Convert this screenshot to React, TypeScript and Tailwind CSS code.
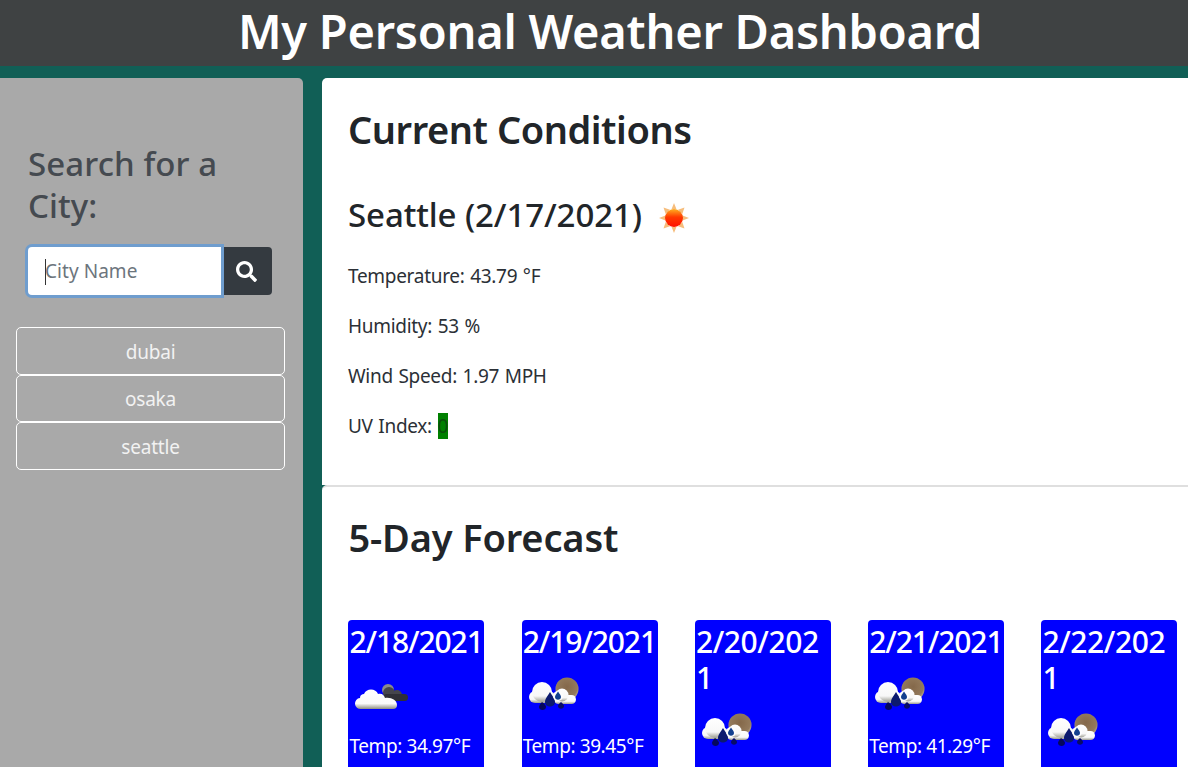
import React from 'react'
import { FaSearch } from 'react-icons/fa'

const font = { fontFamily: '"Noto Sans", sans-serif' }

const SunIcon = () => (
  <svg viewBox="0 0 32 32" className="w-[32px] h-[32px]">
    <defs>
      <linearGradient id="sunCore" x1="0" y1="0" x2="0" y2="1">
        <stop offset="0%" stopColor="#ffb020" />
        <stop offset="45%" stopColor="#ff3a00" />
        <stop offset="100%" stopColor="#ff1000" />
      </linearGradient>
    </defs>
    <g fill="#f6bd7c">
      <path d="M16 1l2.600 6.500h-5.200z" />
      <path d="M16 31l2.600-6.500h-5.200z" />
      <path d="M1 16l6.500-2.600v5.200z" />
      <path d="M31 16l-6.500-2.600v5.200z" />
      <path d="M5.500 5.500l6.500 2.200-4.300 4.300z" />
      <path d="M26.500 5.500l-6.500 2.200 4.300 4.300z" />
      <path d="M5.500 26.500l6.500-2.200-4.300-4.300z" />
      <path d="M26.500 26.500l-6.500-2.200 4.300-4.300z" />
    </g>
    <circle cx="16" cy="16" r="9" fill="url(#sunCore)" />
  </svg>
)

const CloudyIcon = () => (
  <svg viewBox="0 0 60 40" className="w-[60px] h-[40px]">
    <defs>
      <linearGradient id="cloudWhite" x1="0" y1="0" x2="0" y2="1">
        <stop offset="0%" stopColor="#ffffff" />
        <stop offset="72%" stopColor="#fafafa" />
        <stop offset="100%" stopColor="#8d8d80" />
      </linearGradient>
    </defs>
    <circle cx="35" cy="13" r="6" fill="#8b8b8b" />
    <circle cx="36" cy="16" r="6" fill="#45454c" />
    <circle cx="44" cy="18" r="5" fill="#45454c" />
    <rect x="30" y="17" width="25" height="7" rx="3.500" fill="#2f2f36" />
    <path d="M8 32a5.500 5.500 0 0 1-1-11c0-3 2-4 4-4 2-6 12-6 14 0 4-1 6 1 7 4 6-1 12 2 12 7a4 4 0 0 1-4 4z" fill="url(#cloudWhite)" />
  </svg>
)

const RainIcon = () => (
  <svg viewBox="0 0 60 40" className="w-[60px] h-[40px]">
    <defs>
      <linearGradient id="rainCloud" x1="0" y1="0" x2="0" y2="1">
        <stop offset="0%" stopColor="#ffffff" />
        <stop offset="70%" stopColor="#f8f8f8" />
        <stop offset="100%" stopColor="#9b9b90" />
      </linearGradient>
      <radialGradient id="rainSun" cx="50%" cy="40%" r="60%">
        <stop offset="0%" stopColor="#84684a" />
        <stop offset="75%" stopColor="#937a5c" />
        <stop offset="100%" stopColor="#c2b29c" />
      </radialGradient>
    </defs>
    <circle cx="39" cy="12" r="11.500" fill="url(#rainSun)" />
    <g fill="url(#rainCloud)">
      <rect x="1" y="14" width="26" height="12" rx="6" />
      <circle cx="14" cy="15" r="10" />
    </g>
    <g fill="url(#rainCloud)">
      <rect x="26" y="18" width="22" height="9" rx="4.500" />
      <circle cx="34" cy="18" r="6.500" />
    </g>
    <path d="M22 15c-3 5-5 7-5 10 0 6 10 6 10 0 0-3-2-5-5-10z" fill="#0c1a6e" />
    <circle cx="30" cy="19" r="5" fill="#fdfdfd" />
    <path d="M30 14.500c-2 3-3 4-3 5.500 0 3.500 6 3.500 6 0 0-1.500-1-2.500-3-5.500z" fill="#12408f" />
    <path d="M14 25c-2 2-3 4-3 5 0 4 7 4 7 0 0-1-1-3-4-5z" fill="#05085c" />
    <path d="M33 25c-2 2-3 3-3 4 0 3.500 6 3.500 6 0 0-1-1-2-3-4z" fill="#080c66" />
  </svg>
)

const forecast = [
  { date: '2/18/2021', temp: '34.97', icon: <CloudyIcon />, iconMargin: 'ml-[4px]', track: 'tracking-[-1.1px]' },
  { date: '2/19/2021', temp: '39.45', icon: <RainIcon />, iconMargin: 'ml-[5px]', track: 'tracking-[-1.1px]' },
  { date: '2/20/202\n1', temp: '36.12', icon: <RainIcon />, iconMargin: 'ml-[5px]', track: 'tracking-[-0.4px]' },
  { date: '2/21/2021', temp: '41.29', icon: <RainIcon />, iconMargin: 'ml-[5px]', track: 'tracking-[-1.1px]' },
  { date: '2/22/202\n1', temp: '38.60', icon: <RainIcon />, iconMargin: 'ml-[5px]', track: 'tracking-[-0.4px]' },
]

export default function App() {
  return (
    <div className="h-screen overflow-hidden bg-[#115f56]" style={font}>
      <header className="h-[66px] bg-[#3f4243] pl-[32px] text-center">
        <h1 className="text-[47px] leading-[62px] font-semibold text-white tracking-[-0.25px]">
          My Personal Weather Dashboard
        </h1>
      </header>

      <div className="flex gap-[19px] pt-[12px]">
        <aside className="w-[303px] shrink-0 h-[700px] bg-[#a9a9a9] rounded-tr-[5px] pt-[65px]">
          <h2 className="pl-[28px] w-[240px] text-[33px] leading-[42px] font-medium text-[#454a50] tracking-[0.1px]">
            Search for a City:
          </h2>
          <div className="flex ml-[28px] mt-[20px] w-[244px] h-[48px]">
            <div className="relative z-10 flex items-center w-[193px] bg-white rounded-l-[4px] shadow-[0_0_0_3px_#6f9dce] pl-[17px] pt-[1px]">
              <span className="w-px h-[26px] bg-[#333]" />
              <span className="-ml-[1px] text-[19px] text-[#6c757d] tracking-[0.05px]">City Name</span>
            </div>
            <button className="flex-1 flex items-center justify-center bg-[#343a40] rounded-r-[4px] text-white">
              <FaSearch size={21} />
            </button>
          </div>
          <div className="flex flex-col mt-[32px] ml-[16px] w-[269px]">
            {['dubai', 'osaka', 'seattle'].map((city) => (
              <button
                key={city}
                className="h-[47.5px] pt-[2px] border border-white rounded-[5px] text-[19px] text-[#f2f2f2] tracking-[-0.2px]"
              >
                {city}
              </button>
            ))}
          </div>
        </aside>

        <main className="flex-1 min-w-0">
          <section className="h-[407px] bg-white rounded-tl-[5px] pl-[26px] pt-[25px] text-[#212529]">
            <h2 className="text-[38px] leading-[52px] font-semibold tracking-[-0.45px]">Current Conditions</h2>
            <div className="flex items-center mt-[39px] h-[42px]">
              <h3 className="text-[33px] leading-[42px] font-medium tracking-[-0.1px]">Seattle (2/17/2021)</h3>
              <span className="ml-[16px] mt-[5px]"><SunIcon /></span>
            </div>
            <div className="mt-[27px] flex flex-col gap-[23px] text-[19px] leading-[27px] text-[#2b3036] tracking-[-0.3px] [word-spacing:1px]">
              <p>Temperature: 43.79 °F</p>
              <p>Humidity: 53 %</p>
              <p>Wind Speed: 1.97 MPH</p>
              <p>
                UV Index: <span className="bg-[#008000] text-[#0b4f0b]">0</span>
              </p>
            </div>
          </section>

          <section className="h-[400px] bg-white rounded-tl-[5px] pl-[26.4px] pt-[24px] text-[#212529] border-t-2 border-[#dfdfdf]">
            <h2 className="text-[38px] leading-[52px] font-semibold tracking-[-0.15px]">5-Day Forecast</h2>
            <div className="flex gap-[37.25px] mt-[57px]">
              {forecast.map((day) => (
                <div key={day.date} className="w-[136px] h-[240px] shrink-0 bg-[#0000ff] rounded-[4px] px-[1px] pt-[4px] text-white">
                  <h3 className={`text-[30px] leading-[36px] font-medium whitespace-pre ${day.track}`}>{day.date}</h3>
                  <div className={`mt-[17px] h-[40px] ${day.iconMargin}`}>{day.icon}</div>
                  <p className="mt-[15px] text-[19px] leading-[28px] tracking-[-0.4px]">Temp: {day.temp}°F</p>
                </div>
              ))}
            </div>
          </section>
        </main>
      </div>
    </div>
  )
}
